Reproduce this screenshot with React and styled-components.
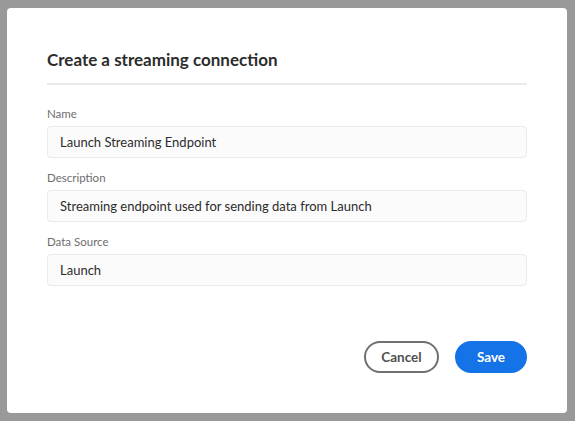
import React from "react";
import styled, { createGlobalStyle } from "styled-components";

const Global = createGlobalStyle`
  html, body { margin: 0; padding: 0; }
  body {
    background: #999999;
    font-family: Lato, "Noto Sans", sans-serif;
    -webkit-font-smoothing: antialiased;
  }
`;

const Backdrop = styled.div`
  width: 575px;
  height: 421px;
  box-sizing: border-box;
  padding: 8px 8px 8px 7px;
  background: #999999;
`;

const Dialog = styled.div`
  width: 560px;
  height: 405px;
  box-sizing: border-box;
  background: #ffffff;
  border-radius: 4px;
  padding: 40px 40px 40px 40px;
  display: flex;
  flex-direction: column;
`;

const Title = styled.h2`
  margin: 0;
  font-size: 17px;
  font-weight: 700;
  color: #2c2c2c;
  line-height: 24px;
  padding-bottom: 11px;
  border-bottom: 2px solid #eaeaea;
`;

const Form = styled.div`
  display: flex;
  flex-direction: column;
  padding-top: 22px;
  gap: 13px;
`;

const Field = styled.label`
  display: flex;
  flex-direction: column;
  gap: 5px;
`;

const Label = styled.span`
  font-size: 11.5px;
  color: #6e6e6e;
  line-height: 14px;
`;

const Input = styled.div`
  height: 32px;
  box-sizing: border-box;
  border: 1px solid #eaeaea;
  border-radius: 4px;
  background: #fbfbfb;
  padding: 0 12px;
  display: flex;
  align-items: center;
  font-size: 13px;
  color: #2c2c2c;
`;

const Footer = styled.div`
  margin-top: auto;
  display: flex;
  justify-content: flex-end;
  gap: 16px;
`;

const Button = styled.button`
  height: 32px;
  box-sizing: border-box;
  border-radius: 16px;
  padding: 0 14px;
  min-width: ${(p) => (p.$primary ? "72px" : "75px")};
  font-family: Lato, "Noto Sans", sans-serif;
  font-size: 13.5px;
  font-weight: 700;
  cursor: pointer;
  border: 2px solid ${(p) => (p.$primary ? "#1473e6" : "#707070")};
  background: ${(p) => (p.$primary ? "#1473e6" : "#ffffff")};
  color: ${(p) => (p.$primary ? "#ffffff" : "#505050")};
`;

export default function App() {
  return (
    <>
      <Global />
      <Backdrop>
        <Dialog>
          <Title>Create a streaming connection</Title>
          <Form>
            <Field>
              <Label>Name</Label>
              <Input>Launch Streaming Endpoint</Input>
            </Field>
            <Field>
              <Label>Description</Label>
              <Input>Streaming endpoint used for sending data from Launch</Input>
            </Field>
            <Field>
              <Label>Data Source</Label>
              <Input>Launch</Input>
            </Field>
          </Form>
          <Footer>
            <Button>Cancel</Button>
            <Button $primary>Save</Button>
          </Footer>
        </Dialog>
      </Backdrop>
    </>
  );
}
